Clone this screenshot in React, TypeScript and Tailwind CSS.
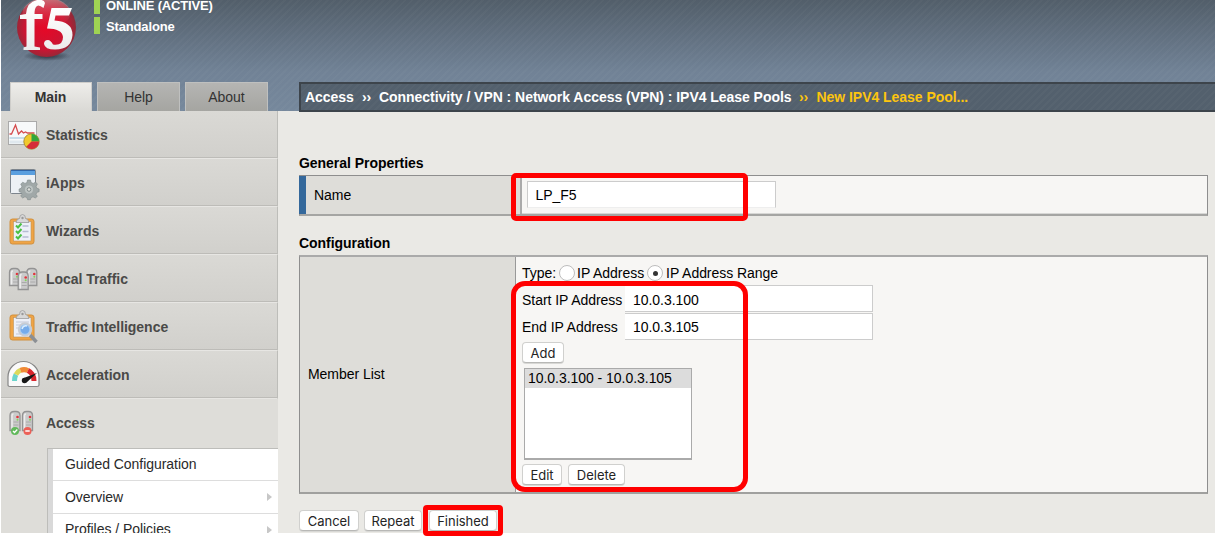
import type { ReactNode } from "react";

const navText = "text-[14px] leading-4 font-bold text-[#4a4a48]";

function Server({ x, y, h = 18 }: { x: number; y: number; h?: number }) {
  return (
    <g>
      <path
        d={`M${x} ${y + h}V${y + 4}Q${x} ${y} ${x + 4} ${y}H${x + 6}Q${x + 10} ${y} ${x + 10} ${y + 4}V${y + h}Z`}
        fill="#cbcbcb"
        stroke="#939393"
        strokeWidth="1.3"
      />
      <path d={`M${x + 2} ${y + h - 1}V${y + 4}q0-1.500 1.500-1.500`} fill="none" stroke="#ededed" strokeWidth="1.500" />
      <path d={`M${x + 3.5} ${y + 10.5}h5M${x + 3.5} ${y + 13.5}h5`} stroke="#aaa" strokeWidth="1" />
      <circle cx={x + 7.5} cy={y + 5.500} r="1.300" fill="#e2353b" />
      <circle cx={x + 7.5} cy={y + 8.200} r="1" fill="#82d65d" />
    </g>
  );
}

function Clipboard({ children }: { children: ReactNode }) {
  return (
    <g>
      <rect x="3" y="6" width="24" height="25" rx="2.500" fill="#f0a445" stroke="#d0903f" />
      <rect x="6.500" y="8.500" width="17.500" height="19.500" fill="#edf0f8" stroke="#bb935c" strokeWidth=".6" />
      {children}
      <path d="M9 9.500Q9.500 6 12.500 5.500Q12.500 1.500 15.500 1.500T18.500 5.500Q21.500 6 22 9.500Z" fill="#d8d8d8" stroke="#9c9c9c" strokeWidth=".8" />
      <circle cx="15.500" cy="5" r="1.200" fill="#999" />
    </g>
  );
}

function StatisticsIcon() {
  return (
    <svg width="36" height="36" viewBox="0 0 36 36">
      <rect x="1.500" y="4.500" width="28" height="23" fill="#f7f9fa" stroke="#aaa" />
      <path d="M2.500 21h25.500" stroke="#b9d3e5" strokeWidth="1.500" />
      <path d="M2.500 25h25.500" stroke="#dfe8ee" strokeWidth="3" />
      <path d="M2.500 17h2l4-9 3 9 3-3 2 2 2-1 2 1h7" fill="none" stroke="#d54c4e" strokeWidth="1.300" />
      <circle cx="24.500" cy="24.500" r="7.700" fill="#f0c92e" stroke="#977d24" strokeWidth=".8" />
      <path d="M24.500 24.500V17a7.500 7.500 0 0 1 7.500 7.500Z" fill="#32a63c" />
      <path d="M24.500 24.500H32A7.500 7.500 0 0 1 19.200 29.800Z" fill="#d52d38" />
    </svg>
  );
}

function AppsIcon() {
  return (
    <svg width="36" height="36" viewBox="0 0 36 36">
      <rect x="3.500" y="4.500" width="25" height="24" rx="1" fill="#edf1f5" stroke="#7d858d" />
      <path d="M4 5h24v5H4Z" fill="#5a9fdf" />
      <path d="M4 5.500h24" stroke="#2f65a8" />
      <g fill="#a0a8a8" stroke="#808a8a" strokeWidth=".6">
        <path d="M20.500 15h3l.7 2.600 2 .8 2.400-1.300 1.800 2-1.300 2.300.8 1.900 2.200.7v2.700l-2.200.6-.9 2 1.300 2.100-2 1.600-2.300-1.200-1.900.8-.7 2.100h-2.800l-.7-2.100-2-.8-2.200 1.200-2-1.900 1.300-1.900-.9-1.900-2-.6v-2.700l2-.7.8-2-1.200-2.100 2-2 2.300 1.200 1.900-.8Z" />
      </g>
      <circle cx="22" cy="24.500" r="4" fill="#bdc4c3" />
      <circle cx="22" cy="24.500" r="1.800" fill="#dedfdb" stroke="#808a8a" />
    </svg>
  );
}

function WizardsIcon() {
  return (
    <svg width="36" height="36" viewBox="0 0 36 36">
      <Clipboard>
        <path d="M15.500 13h6M15.500 18.500h6M15.500 24h6" stroke="#b5bcd2" strokeWidth="1.500" />
        <path d="m9 12.500 2 2 3.500-4M9 18l2 2 3.500-4M9 23.500l2 2 3.500-4" fill="none" stroke="#4bc044" strokeWidth="2" />
      </Clipboard>
    </svg>
  );
}

function LocalTrafficIcon() {
  return (
    <svg width="36" height="36" viewBox="0 0 36 36">
      <Server x={2.500} y={7.500} h={17} /><Server x={19.800} y={7.500} h={17} /><Server x={11.200} y={11} h={17.500} />
    </svg>
  );
}

function IntelligenceIcon() {
  return (
    <svg width="36" height="36" viewBox="0 0 36 36">
      <Clipboard>
        <path d="M9 13h13M9 16h12M9 19h12M9 25h9" stroke="#c3c9d8" />
        <path d="m23 26 6.500 7" stroke="#8b8f94" strokeWidth="3.500" />
        <circle cx="18" cy="20.500" r="6.200" fill="#a5cbf2" stroke="#c7ccd4" strokeWidth="2" />
        <circle cx="18" cy="20.500" r="4.300" fill="#75abea" />
        <path d="M15 20q1-4 5-3" fill="none" stroke="#d9edff" strokeWidth="1.500" />
      </Clipboard>
    </svg>
  );
}

function AccelerationIcon() {
  return (
    <svg width="36" height="36" viewBox="0 0 36 36">
      <path d="M1 28V20a15.500 15.500 0 0 1 31 0v8q0 1.500-2 1.500H3Q1 29.500 1 28Z" fill="#fafafa" stroke="#868686" strokeWidth="1.200" />
      <g fill="none" strokeWidth="5">
        <path d="M7.500 24q0-4 1.500-6.500" stroke="#6bd5cc" />
        <path d="M9 17.500q1.500-3 4.500-4.200" stroke="#dcd95a" />
        <path d="M13.500 13.300q4-1.500 7.500.3" stroke="#f08a35" />
        <path d="M21 13.600q6 3 6 10.400" stroke="#d9262d" />
      </g>
      <path d="m30 16-10.500 9.500-4-4Z" fill="#171717" />
      <circle cx="17.500" cy="23.500" r="2.700" fill="#171717" />
    </svg>
  );
}

function AccessIcon() {
  return (
    <svg width="36" height="36" viewBox="0 0 36 36">
      <Server x={4} y={6.500} h={19} /><Server x={16.500} y={6.500} h={19} />
      <circle cx="9" cy="26" r="4" fill="#62b95c" />
      <path d="m7 26 1.500 1.500 2.800-3" fill="none" stroke="white" strokeWidth="1.300" />
      <circle cx="21.500" cy="26" r="4" fill="#ec6057" />
      <path d="M19.300 26h4.400" stroke="white" strokeWidth="1.500" />
    </svg>
  );
}

function Logo() {
  return (
    <svg className="ml-[12px] h-[62px] w-[68px]" viewBox="0 0 68 62">
      <defs>
        <radialGradient id="ball" cx="48%" cy="52%" r="54%">
          <stop offset="0" stopColor="#e60827" />
          <stop offset=".65" stopColor="#cb1532" />
          <stop offset="1" stopColor="#862e3a" />
        </radialGradient>
        <linearGradient id="gloss" x1="0" y1="0" x2="0" y2="1">
          <stop offset="0" stopColor="#f7b0b4" stopOpacity=".55" />
          <stop offset="1" stopColor="#df3245" stopOpacity="0" />
        </linearGradient>
        <linearGradient id="letters" x1="0" y1="0" x2="0" y2="1">
          <stop offset="0" stopColor="#fff" />
          <stop offset="1" stopColor="#ececec" />
        </linearGradient>
        <radialGradient id="shadow">
          <stop offset="0" stopColor="#222b36" stopOpacity=".9" />
          <stop offset="1" stopColor="#222b36" stopOpacity="0" />
        </radialGradient>
      </defs>
      <ellipse cx="34" cy="56" rx="24" ry="5" fill="url(#shadow)" />
      <circle cx="33.500" cy="27.500" r="29.500" fill="url(#ball)" />
      <ellipse cx="33.500" cy="13" rx="24" ry="15" fill="url(#gloss)" />
      <path d="M10.500 50v-2.500l3-1V19H7v-4l6-1Q14 2 24 0Q31-1 32 3L30.500 8Q25 3.500 23 7Q21.500 9 21.500 14H29.500v5h-8v27.500l5.500 1V50Z" fill="url(#letters)" />
      <path d="M38.500 8h20.500l-3 7.500H42.500L41.500 20.500Q59.500 21.500 59.500 35Q58.500 49.500 42 49.500Q32 49.500 31 44Q31 40 35 40Q37.500 40 40 44.500Q50 46 50 37Q49 28.500 34 28.500Z" fill="url(#letters)" />
    </svg>
  );
}

const navigation = [
  { label: "Statistics", Icon: StatisticsIcon },
  { label: "iApps", Icon: AppsIcon },
  { label: "Wizards", Icon: WizardsIcon },
  { label: "Local Traffic", Icon: LocalTrafficIcon },
  { label: "Traffic Intelligence", Icon: IntelligenceIcon },
  { label: "Acceleration", Icon: AccelerationIcon },
];

function ActionButton({ children, width }: { children: string; width: string }) {
  return (
    <button className={`${width} h-[21px] shrink-0 rounded-[4px] border border-[#d0d0ce] border-b-[#b8b8b6] bg-white text-center font-['Inter',sans-serif] text-[13px] leading-[20px] tracking-[-0.02px] text-[#242424] shadow-[0_1px_0_#d8d8d5]`}>
      {children}
    </button>
  );
}

function Radio({ checked = false }: { checked?: boolean }) {
  return (
    <button role="radio" aria-checked={checked} className="flex h-4 w-4 shrink-0 items-center justify-center rounded-full border border-[#bdbdbd] bg-white">
      {checked && <span className="h-[5px] w-[5px] rounded-full bg-[#343434]" />}
    </button>
  );
}

export default function App() {
  return (
    <div className="h-[536px] w-[1216px] overflow-hidden bg-white pl-px font-['Liberation_Sans',Arial,sans-serif] text-[14px] tracking-[-0.04px] text-black">
      <div className="relative h-[533px] w-[1214px] bg-[#eae9e5]">
        <header className="flex h-[111px] bg-[repeating-linear-gradient(135deg,rgba(255,255,255,.025)_0px,rgba(255,255,255,.025)_2px,transparent_2px,transparent_5px),linear-gradient(#525e6a,#718296_65%,#76889c)]">
          <div className="w-[298px] shrink-0">
            <div className="flex h-[82px] items-start">
              <Logo />
              <div className="ml-[13px] w-[170px] text-[13px] font-bold tracking-[-0.15px] text-white">
                <div className="h-[14px] border-l-[6px] border-[#9fd353] pl-[6px] leading-[12px]">ONLINE (ACTIVE)</div>
                <div className="mt-[3px] h-[17px] border-l-[6px] border-[#9fd353] pl-[6px] leading-[19px]">Standalone</div>
              </div>
            </div>
            <nav className="flex gap-[5px] pl-[9px] text-center leading-[28px] text-[#333]">
              <button className="h-[29px] w-[82px] border border-b-0 border-[#cecdca] bg-linear-to-b from-[#eeedea] to-[#dad9d5] pr-[1px] font-bold">Main</button>
              <button className="h-[29px] w-[83px] border border-b-0 border-[#bfc0bf] bg-linear-to-b from-[#b5b5b3] to-[#a5a5a1]">Help</button>
              <button className="h-[29px] w-[83px] border border-b-0 border-[#bfc0bf] bg-linear-to-b from-[#b5b5b3] to-[#a5a5a1]">About</button>
            </nav>
          </div>
          <div className="mt-[82px] flex h-[30px] flex-1 items-center border-2 border-r-0 border-[#3d444b] bg-[#53606d] bg-[repeating-linear-gradient(135deg,rgba(255,255,255,.025)_0px,rgba(255,255,255,.025)_2px,transparent_2px,transparent_5px)] pl-[4px] font-bold text-white">
            <span className="w-[57px]">Access</span><span className="w-[17px]">››</span>
            <span className="w-[420px] whitespace-nowrap">Connectivity / VPN : Network Access (VPN) : IPV4 Lease Pools</span>
            <span className="w-[17.500px] text-[#fdc50e]">››</span><span className="text-[#fdc50e]">New IPV4 Lease Pool...</span>
          </div>
        </header>

        <div className="flex h-[422px]">
          <aside className="h-[422px] w-[277px] shrink-0 overflow-hidden bg-[#deddd9]">
            {navigation.map(({ label, Icon }) => (
              <button key={label} className="flex h-12 w-full items-center border-r border-b border-r-[#bdbdb9] border-b-[#e7e6e3] bg-linear-to-b from-[#dad9d5] to-[#d1d0cc] pl-[6px] shadow-[inset_0_-1px_0_#bdbcb8]">
                <Icon /><span className={`ml-[3px] ${navText}`}>{label}</span>
              </button>
            ))}
            <button className="flex h-[49px] w-full items-center pb-px pl-[5px]"><AccessIcon /><span className={`ml-[4px] ${navText}`}>Access</span></button>
            <div className="ml-[46px] h-[86px] border-t border-l border-[#bdbdba] bg-[#d9d9d9] pl-[5px] text-[#292929]">
              <div className="flex h-8 items-center border-b border-[#ddd] bg-white pl-[12px]">Guided Configuration</div>
              <div className="flex h-[33px] items-center border-b border-[#ddd] bg-white pr-[6px] pl-[12px]"><span className="flex-1">Overview</span><svg width="5" height="8"><path d="M0 0 5 4 0 8Z" fill="#c7c7c7" /></svg></div>
              <div className="flex h-[31px] items-center bg-white pr-[6px] pl-[12px]"><span className="flex-1">Profiles / Policies</span><svg width="5" height="8"><path d="M0 0 5 4 0 8Z" fill="#c7c7c7" /></svg></div>
            </div>
          </aside>

          <main className="w-[931px] pt-[43px] pl-[21px]">
            <h2 className="h-[21px] leading-[18px] font-bold">General Properties</h2>
            <section className="flex h-[41px] w-[909px] border border-b-2 border-[#8e8e8e] border-b-[#a5a5a3] bg-[#f7f6f4] shadow-[inset_0_-1px_0_#d7d7d5]">
              <div className="-ml-px flex w-[217px] items-center border-r border-l-[7px] border-r-[#aaa] border-l-[#34689b] bg-[#deddd9] pl-[8px]">Name</div>
              <div className="w-[6px] border-r-2 border-[#aaa] bg-[#deddd9]" />
              <input className="mt-[5px] ml-[5px] h-[27px] w-[249px] border border-[#ccc] border-b-[#eee] bg-white px-[7.500px] pt-px" defaultValue="LP_F5" />
            </section>
            <h2 className="mt-[18px] h-[21px] leading-[18px] font-bold">Configuration</h2>
            <section className="flex h-[239px] w-[909px] border-x border-t-2 border-b-2 border-x-[#8e8e8e] border-t-[#aaa] border-b-[#a0a09e] bg-[#f7f6f4]">
              <div className="flex w-[216px] items-center border-r border-[#999] bg-[#deddd9] pl-[8px]">Member List</div>
              <div className="flex-1 pt-[8px] pl-[6px]">
                <div className="flex h-[20px] items-start leading-[17px]"><span className="mr-[3px]">Type:</span><Radio /><span className="mr-[3px] ml-[2px]">IP Address</span><Radio checked /><span className="ml-[3px]">IP Address Range</span></div>
                <label className="flex h-[28px] items-start"><span className="w-[103px] leading-[30px]">Start IP Address</span><input className="h-[27px] w-[248px] border border-l-0 border-[#ccc] bg-white px-[8px] pt-[2px]" defaultValue="10.0.3.100" /></label>
                <label className="flex h-[29px] items-start"><span className="w-[103px] leading-[28px]">End IP Address</span><input className="h-[27px] w-[248px] border border-l-0 border-[#ccc] bg-white px-[8px] pt-px" defaultValue="10.0.3.105" /></label>
                <ActionButton width="w-[42px]">Add</ActionButton>
                <div className="mt-[4px] ml-[2px] h-[92px] w-[168px] border border-b-2 border-[#aaa] bg-white"><div className="h-[19px] bg-[#dcdcdc] pl-[3px] leading-[19px]">10.0.3.100 - 10.0.3.105</div></div>
                <div className="mt-[4px] flex gap-[6px]"><ActionButton width="w-[40px]">Edit</ActionButton><ActionButton width="w-[57px]">Delete</ActionButton></div>
              </div>
            </section>
            <div className="mt-[16px] flex"><ActionButton width="w-[60px] mr-[5px]">Cancel</ActionButton><ActionButton width="w-[58px] mr-[7px]">Repeat</ActionButton><ActionButton width="w-[68px]">Finished</ActionButton></div>
          </main>
        </div>
        <div className="pointer-events-none absolute top-[173px] left-[510px] h-[48px] w-[237px] rounded-[5px] border-[5px] border-[#ff0000]" />
        <div className="pointer-events-none absolute top-[281px] left-[510px] h-[211px] w-[237px] rounded-[14px] border-[5px] border-[#ff0000]" />
        <div className="pointer-events-none absolute top-[505px] left-[422px] h-[31px] w-[80px] rounded-[4px] border-[5px] border-[#ff0000]" />
      </div>
    </div>
  );
}
